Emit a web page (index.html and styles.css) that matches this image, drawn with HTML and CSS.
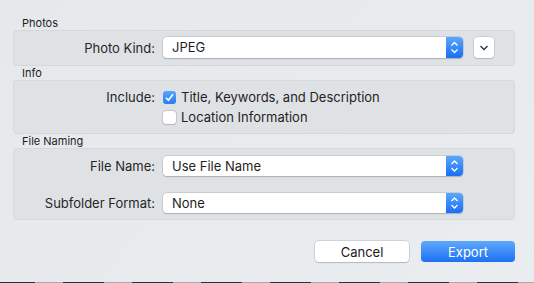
FILE: index.html
```html
<!DOCTYPE html>
<html lang="en">
<head>
    <meta charset="UTF-8">
    <title>Export</title>
    <link rel="stylesheet" href="styles.css">
</head>
<body>
    <div class="sheet">
        <!-- Photos -->
        <div class="group-title">Photos</div>
        <div class="group group-photos">
            <div class="row">
                <span class="label">Photo Kind:</span>
                <div class="popup">
                    <span class="popup-text">JPEG</span>
                    <span class="stepper">
                        <svg width="17" height="21" viewBox="0 0 17 21"><path d="M5.5 8.5 L8.5 5.5 L11.5 8.5 M5.5 12.5 L8.5 15.5 L11.5 12.5" fill="none" stroke="#fff" stroke-width="1.3"/></svg>
                    </span>
                </div>
                <span class="disclosure">
                    <svg width="10" height="6" viewBox="0 0 10 6"><path d="M1.5 1 L5 4.5 L8.5 1" fill="none" stroke="#333" stroke-width="1.4"/></svg>
                </span>
            </div>
        </div>

        <!-- Info -->
        <div class="group-title">Info</div>
        <div class="group group-info">
            <div class="check-row">
                <span class="label">Include:</span>
                <span class="checkbox checked">
                    <svg width="13" height="13" viewBox="0 0 13 13"><path d="M3 6.8 L5.4 9.3 L10 3.3" fill="none" stroke="#fff" stroke-width="1.6"/></svg>
                </span>
                <span class="check-text">Title, Keywords, and Description</span>
            </div>
            <div class="check-row">
                <span class="label"></span>
                <span class="checkbox"></span>
                <span class="check-text">Location Information</span>
            </div>
        </div>

        <!-- File Naming -->
        <div class="group-title">File Naming</div>
        <div class="group group-naming">
            <div class="row">
                <span class="label">File Name:</span>
                <div class="popup">
                    <span class="popup-text">Use File Name</span>
                    <span class="stepper">
                        <svg width="17" height="20" viewBox="0 0 17 20"><path d="M5.5 8 L8.5 5 L11.5 8 M5.5 12 L8.5 15 L11.5 12" fill="none" stroke="#fff" stroke-width="1.3"/></svg>
                    </span>
                </div>
            </div>
            <div class="row">
                <span class="label">Subfolder Format:</span>
                <div class="popup">
                    <span class="popup-text">None</span>
                    <span class="stepper">
                        <svg width="17" height="20" viewBox="0 0 17 20"><path d="M5.5 8 L8.5 5 L11.5 8 M5.5 12 L8.5 15 L11.5 12" fill="none" stroke="#fff" stroke-width="1.3"/></svg>
                    </span>
                </div>
            </div>
        </div>

        <div class="buttons">
            <button class="btn btn-cancel">Cancel</button>
            <button class="btn btn-export">Export</button>
        </div>
    </div>
    <div class="dock-edge"></div>
</body>
</html>
```

FILE: styles.css
```css
* {
    margin: 0;
    padding: 0;
    box-sizing: border-box;
}

body {
    width: 534px;
    height: 283px;
    overflow: hidden;
    background: linear-gradient(135deg, #e6e9ec, #eaedf0);
    font-family: Inter, Roboto, "Liberation Sans", sans-serif;
    font-size: 13px;
    color: #262626;
    display: flex;
    flex-direction: column;
}

.sheet {
    flex: 1;
    padding: 16px 19px 0 13px;
}

.group-title {
    height: 14px;
    line-height: 14px;
    font-size: 11px;
    padding-left: 9px;
    color: #1c1c1c;
}

.group {
    background-color: #dfe2e5;
    border: 1px solid #d6d9dc;
    border-radius: 4px;
}

.group-photos {
    height: 36px;
    padding-top: 6px;
}

.group-info {
    height: 54px;
    padding-top: 9px;
}

.group-naming {
    height: 72px;
    padding-top: 6px;
    display: flex;
    flex-direction: column;
    gap: 16px;
}

.row {
    display: flex;
    align-items: center;
    height: 21px;
}

.label {
    width: 141px;
    margin-right: 8px;
    text-align: right;
    flex-shrink: 0;
}

/* Popup button */
.popup {
    width: 300px;
    height: 21px;
    display: flex;
    background-color: #fff;
    border-radius: 4px;
    box-shadow: 0 0 0 0.5px #b5b7ba, 0 1px 1px rgba(0, 0, 0, 0.25);
    overflow: hidden;
}

.group-naming .popup {
    height: 20px;
}

.popup-text {
    flex: 1;
    padding-left: 9px;
    line-height: 21px;
    color: #1f1f1f;
}

.group-naming .popup-text {
    line-height: 20px;
}

.stepper {
    width: 17px;
    background: linear-gradient(#5aa8fb, #1a6ef6);
    display: flex;
}

.disclosure {
    width: 20px;
    height: 21px;
    margin-left: 11px;
    background-color: #fff;
    border-radius: 4px;
    box-shadow: 0 0 0 0.5px #b5b7ba, 0 1px 1px rgba(0, 0, 0, 0.2);
    display: flex;
    align-items: center;
    justify-content: center;
}

/* Checkboxes */
.check-row {
    display: flex;
    align-items: center;
    height: 14px;
    margin-bottom: 6px;
}

.checkbox {
    width: 13px;
    height: 13px;
    border-radius: 3px;
    background-color: #fff;
    box-shadow: 0 0 0 0.5px #a9abae, 0 1px 1px rgba(0, 0, 0, 0.15);
    margin-right: 5px;
    display: flex;
}

.checkbox.checked {
    background: linear-gradient(#58a6fb, #2a7bf6);
    box-shadow: none;
}

.check-text {
    color: #1f1f1f;
}

/* Buttons */
.buttons {
    display: flex;
    justify-content: flex-end;
    gap: 12px;
    margin-top: 21px;
}

.btn {
    width: 94px;
    height: 21px;
    border: none;
    border-radius: 4px;
    font-family: Inter, Roboto, "Liberation Sans", sans-serif;
    font-size: 13px;
}

.btn-cancel {
    background-color: #fff;
    color: #1a1a1a;
    box-shadow: 0 0 0 0.5px #b5b7ba, 0 1px 1px rgba(0, 0, 0, 0.2);
}

.btn-export {
    background: linear-gradient(#5fa9fb, #1c70f5);
    color: #fff;
}

.dock-edge {
    height: 1px;
    background: repeating-linear-gradient(90deg, #2a3240 0 35px, #a6a9ad 35px 63px, #2a3240 63px 69px);
}
```
